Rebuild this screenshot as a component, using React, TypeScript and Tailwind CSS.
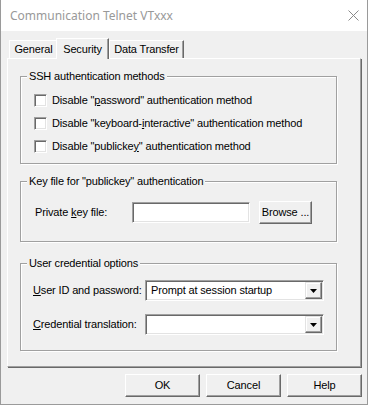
import React from 'react';

const font = { fontFamily: '"Liberation Sans", Arial, sans-serif' };

function U({ children }: { children: React.ReactNode }) {
  return <span className="underline underline-offset-[1px]">{children}</span>;
}

function GroupBox({ title, className, children }: { title: string; className: string; children: React.ReactNode }) {
  return (
    <div
      className={`relative ml-[12px] w-[317px] border border-[#a0a0a0] shadow-[1px_1px_0_#ffffff,inset_1px_1px_0_#ffffff] ${className}`}
    >
      <span className="absolute left-[6px] top-[-8px] bg-[#f0f0f0] px-[2px] leading-[14px]">{title}</span>
      {children}
    </div>
  );
}

function CheckRow({ children }: { children: React.ReactNode }) {
  return (
    <div className="flex h-[23px] items-center">
      <span className="h-[13px] w-[13px] border border-t-[#a0a0a0] border-l-[#a0a0a0] border-r-white border-b-white bg-white shadow-[inset_1px_1px_0_#696969,inset_-1px_-1px_0_#e3e3e3]" />
      <span className="ml-[5px]">{children}</span>
    </div>
  );
}

function Button({ label, className }: { label: string; className: string }) {
  return (
    <div
      className={`flex h-[23px] items-center justify-center border border-t-white border-l-white border-r-[#696969] border-b-[#696969] bg-[#f0f0f0] shadow-[inset_-1px_-1px_0_#a0a0a0] ${className}`}
    >
      {label}
    </div>
  );
}

const sunken =
  'border border-t-[#a0a0a0] border-l-[#a0a0a0] border-r-white border-b-white bg-white shadow-[inset_1px_1px_0_#696969,inset_-1px_-1px_0_#e3e3e3]';

function Select({ value }: { value: string }) {
  return (
    <div className={`flex h-[21px] w-[179px] items-center justify-between p-[1px] ${sunken}`}>
      <span className="pl-[4px]">{value}</span>
      <span className="flex h-[17px] w-[17px] items-center justify-center border border-t-[#e3e3e3] border-l-[#e3e3e3] border-r-[#696969] border-b-[#696969] bg-[#f0f0f0] shadow-[inset_-1px_-1px_0_#a0a0a0,inset_1px_1px_0_#ffffff]">
        <svg width="7" height="4" viewBox="0 0 7 4" className="mt-[1px]">
          <polygon points="0,0 7,0 3.5,4" fill="#000000" />
        </svg>
      </span>
    </div>
  );
}

export default function App() {
  return (
    <div
      className="flex h-[405px] w-[368px] flex-col border-x border-b border-[#9a9a9a] bg-[#f0f0f0] text-[11px] tracking-[-0.15px] text-black"
      style={font}
    >
      {/* title bar */}
      <div className="flex h-[31px] shrink-0 items-center justify-between bg-white pl-[9px] pr-[8px]">
        <span className="text-[12px] tracking-normal text-[#999999]" style={{ fontFamily: '"Noto Sans", sans-serif' }}>
          Communication Telnet VTxxx
        </span>
        <svg width="11" height="11" viewBox="0 0 11 11">
          <path d="M0.5 0.5 L10.5 10.5 M10.5 0.5 L0.5 10.5" stroke="#8a8a8a" strokeWidth="1" />
        </svg>
      </div>

      <div className="flex flex-col pl-[6px] pt-[7px]">
        {/* tabs */}
        <div className="flex h-[20px] items-end pl-[2px]">
          <div className="flex h-[18px] w-[49px] items-center justify-center border-l border-t border-r border-l-white border-t-white border-r-[#696969] shadow-[inset_-1px_0_0_#a0a0a0]">
            General
          </div>
          <div className="relative z-10 -mb-[1px] -ml-[2px] flex h-[21px] w-[53px] items-start justify-center border-l border-t border-r border-l-white border-t-white border-r-[#696969] bg-[#f0f0f0] pt-[2px] shadow-[inset_-1px_0_0_#a0a0a0]">
            Security
          </div>
          <div className="flex h-[18px] w-[75px] items-center justify-center border-l border-t border-r border-l-white border-t-white border-r-[#696969] shadow-[inset_-1px_0_0_#a0a0a0]">
            Data Transfer
          </div>
        </div>

        {/* tab page */}
        <div className="flex h-[309px] w-[354px] flex-col border border-t-white border-l-white border-r-[#a0a0a0] border-b-[#a0a0a0] shadow-[1px_1px_0_#696969]">
          <GroupBox title="SSH authentication methods" className="mt-[17px] h-[88px] pl-[13px] pt-[12px]">
            <CheckRow>
              Disable "<U>p</U>assword" authentication method
            </CheckRow>
            <CheckRow>
              Disable "keyboard-<U>i</U>nteractive" authentication method
            </CheckRow>
            <CheckRow>
              Disable "publicke<U>y</U>" authentication method
            </CheckRow>
          </GroupBox>

          <GroupBox title={'Key file for "publickey" authentication'} className="mt-[17px] h-[61px] pl-[14px] pt-[19px]">
            <div className="flex h-[23px] items-center">
              <span className="w-[97px]">
                Private <U>k</U>ey file:
              </span>
              <div className={`h-[21px] w-[118px] ${sunken}`} />
              <Button label="Browse ..." className="ml-[9px] w-[53px]" />
            </div>
          </GroupBox>

          <GroupBox title="User credential options" className="mt-[21px] h-[88px] pl-[12px] pt-[16px]">
            <div className="flex h-[21px] items-center">
              <span className="w-[112px]">
                <U>U</U>ser ID and password:
              </span>
              <Select value="Prompt at session startup" />
            </div>
            <div className="mt-[13px] flex h-[21px] items-center">
              <span className="w-[112px]">
                <U>C</U>redential translation:
              </span>
              <Select value="" />
            </div>
          </GroupBox>
        </div>

        {/* dialog buttons */}
        <div className="mt-[7px] flex w-[355px] justify-end gap-[6px]">
          <Button label="OK" className="w-[75px]" />
          <Button label="Cancel" className="w-[75px]" />
          <Button label="Help" className="w-[75px]" />
        </div>
      </div>
    </div>
  );
}
